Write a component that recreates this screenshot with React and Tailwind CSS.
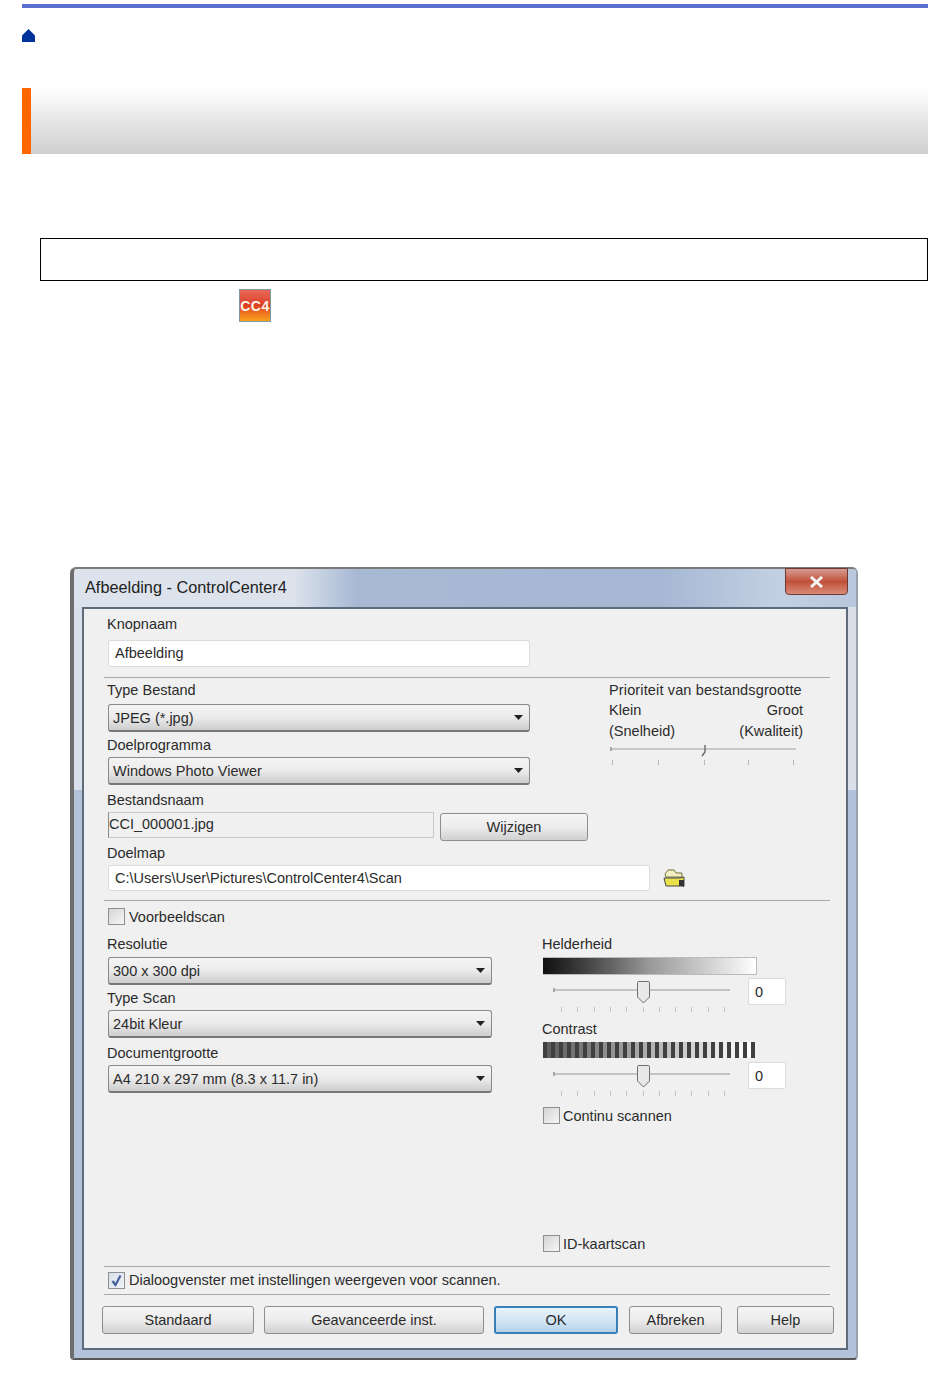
const font = "font-['Liberation_Sans',Arial,sans-serif] text-[14.5px] leading-[16px] text-[#2b2b2b]";

function Label({ children, className = "" }) {
  return <div className={`h-4 whitespace-nowrap -ml-px ${className}`}>{children}</div>;
}

function Arrow() {
  return (
    <svg width="9" height="5" viewBox="0 0 9 5" className="shrink-0">
      <path d="M0 0H9L4.500 5Z" fill="#222" />
    </svg>
  );
}

function Select({ value, className = "" }) {
  return (
    <div className={`flex items-center justify-between pl-1 pr-[6px] rounded-[3px] border border-[#8a8a8a] border-b-2 border-b-[#777] bg-gradient-to-b from-[#f4f4f4] via-[#ebebeb] to-[#cdcdcd] ${className}`}>
      <span className="whitespace-nowrap">{value}</span>
      <Arrow />
    </div>
  );
}

function TextBox({ value, className = "" }) {
  return (
    <div className={`flex items-center pl-[6px] bg-white border border-[#dcdcdc] rounded-[2px] whitespace-nowrap ${className}`}>{value}</div>
  );
}

function Button({ children, primary = false, className = "" }) {
  const tone = primary
    ? "border-2 border-[#3a7fb5] from-[#e8f3fb] via-[#d3e6f5] to-[#b4d2ea]"
    : "border border-[#8e8e8e] from-[#f5f5f5] via-[#ececec] to-[#d0d0d0]";
  return (
    <div className={`flex shrink-0 items-center justify-center h-[28px] rounded-[3px] bg-gradient-to-b whitespace-nowrap ${tone} ${className}`}>{children}</div>
  );
}

function Check({ checked = false }) {
  const tone = checked ? "from-[#d9dfea] to-[#f0f3f8]" : "from-[#d5d5d5] to-[#f6f6f6]";
  return (
    <div className={`w-[17px] h-[17px] shrink-0 border border-[#8f8f8f] bg-gradient-to-br flex items-center justify-center ${tone}`}>
      {checked && (
        <svg width="13" height="13" viewBox="0 0 13 13">
          <path d="M2.500 7L5.500 11L10.500 1.500" fill="none" stroke="#46609c" strokeWidth="2.200" />
        </svg>
      )}
    </div>
  );
}

function Rule({ className = "" }) {
  return <div className={`h-px bg-[#a8a8a8] ${className}`} />;
}

function LevelSlider() {
  const ticks = [18, 34, 51, 67, 83, 100, 116, 132, 148, 165, 181];
  return (
    <svg width="200" height="35" viewBox="0 0 200 35" className="shrink-0">
      <rect x="10" y="11" width="177" height="2" fill="#c4c4c4" />
      <rect x="10" y="10" width="2" height="4" fill="#a8a8a8" />
      {ticks.map((x) => (
        <rect key={x} x={x} y="29" width="1" height="5" fill="#c4c4c4" />
      ))}
      <path d="M94.500 4.500Q94.500 3.500 96 3.500H105Q106.500 3.500 106.500 4.500V19L100.500 25L94.500 19Z" fill="#e8e8e8" stroke="#6f6f6f" />
    </svg>
  );
}

function Stripes() {
  const n = 26;
  return (
    <div className="flex h-4 w-[212px]">
      {Array.from({ length: n }).map((_, i) => {
        const v = Math.round(96 + (i / (n - 1)) * 159);
        return (
          <div key={i} className="flex w-2">
            <div className="w-1 bg-[#404040]" />
            <div className="w-1" style={{ background: `rgb(${v},${v},${v})` }} />
          </div>
        );
      })}
      <div className="w-1 bg-[#404040]" />
    </div>
  );
}

function Folder() {
  return (
    <svg width="22" height="20" viewBox="0 0 22 20" className="shrink-0">
      <path d="M2 5L5 1H11L13 4H19V8H3Z" fill="#f4efc4" stroke="#6f6f3a" />
      <path d="M1 9H17L21 8V17H3Z" fill="#e9e24a" stroke="#444" />
      <path d="M3 18H21V15L20 18Z" fill="#111" />
      <rect x="16" y="11" width="5" height="6" fill="#333" />
    </svg>
  );
}

function PrioritySlider() {
  return (
    <svg width="190" height="22" viewBox="0 0 190 22" className="block">
      <rect x="1" y="3" width="186" height="2" fill="#c8c8c8" />
      <rect x="1" y="2" width="2" height="4" fill="#a8a8a8" />
      {[3, 49, 95, 139, 184].map((x) => (
        <rect key={x} x={x} y="15" width="1" height="5" fill="#b8b8b8" />
      ))}
      <path d="M96 0V7L93 11" fill="none" stroke="#666" strokeWidth="1.400" />
    </svg>
  );
}

export default function App() {
  return (
    <div className="bg-white w-[950px] h-[1387px] overflow-hidden pl-[22px] pt-1">
      <div className="w-[906px]">
        <div className="h-1 bg-[#5b6fd1]" />
        <svg width="13" height="14" viewBox="0 0 13 14" className="block mt-[21px]">
          <path d="M0 6.500L6.500 0L13 6.500V13H0Z" fill="#003399" />
        </svg>
        <div className="mt-[45px] h-[66px] flex bg-gradient-to-b from-white via-[#e6e6e6] to-[#cfcfcf]">
          <div className="w-[9px] bg-[#ff6600]" />
        </div>
        <div className="mt-[84px] ml-[18px] h-[43px] border border-black" />
        <div className="mt-2 ml-[217px] w-8 h-[33px] border border-[#7f9aa0] bg-gradient-to-b from-[#e8685a] via-[#dd3d1f] to-[#f8a21c] flex items-center justify-center font-['Liberation_Sans',sans-serif] font-bold text-[14px] tracking-[0.5px] leading-none text-[#fff3ee]">
          CC4
        </div>

        {/* Dialog window */}
        <div className={`relative mt-[245px] ml-[48px] w-[788px] h-[793px] rounded-t-[6px] rounded-b-[4px] border-l-[4px] border-r-[2px] border-b-2 border-t-2 border-l-[#6d6d6d] border-r-[#9aa3ad] border-t-[#7a7a7a] border-b-[#555] bg-gradient-to-b from-[#d9e0ea] from-[28%] to-[#b1c2da] to-[28%] ${font}`}>
          <div className="absolute right-[8px] -top-px w-[63px] h-[27px] rounded-b-[4px] border border-[#6b3a34] bg-gradient-to-b from-[#d69a90] via-[#c0503a] to-[#d88a78] flex items-center justify-center">
            <svg width="15" height="12" viewBox="0 0 15 12">
              <path d="M2 1L13 11M13 1L2 11" stroke="#f4f4f4" strokeWidth="3" />
            </svg>
          </div>
          <div className="h-[38px] flex items-center pl-[11px] pb-[2px] rounded-t-[5px] bg-[linear-gradient(to_right,#dde3ec_0%,#dde3ec_28%,#a8b9d4_36%,#a5b7d3_75%,#c3d0e3_90%,#b8c7dd_100%)] text-[16.3px] text-[#222]">
            Afbeelding - ControlCenter4
          </div>

          <div className="ml-[8px] mr-[8px] h-[743px] border-2 border-[#5d6b7b] bg-[#f0f0f0] pt-[7px] pl-[20px] pr-[16px]">
            <div className="pl-1">
              <Label>Knopnaam</Label>
              <TextBox value="Afbeelding" className="mt-2 h-[27px] w-[422px] pb-px" />
            </div>
            <Rule className="mt-[10px]" />

            <div className="flex pl-1">
              <div className="w-[501px]">
                <Label className="mt-1">Type Bestand</Label>
                <Select value="JPEG (*.jpg)" className="mt-[6px] h-[28px] w-[422px]" />
                <Label className="mt-[5px]">Doelprogramma</Label>
                <Select value="Windows Photo Viewer" className="mt-1 h-[28px] w-[422px]" />
                <Label className="mt-[7px]">Bestandsnaam</Label>
                <div className="flex mt-1 h-[29px]">
                  <div className="w-[326px] h-[26px] flex items-center pb-[3px] border border-[#c8c8c8] border-l-[#8a8a8a] whitespace-nowrap">CCI_000001.jpg</div>
                  <Button className="ml-[6px] mt-px w-[148px]">Wijzigen</Button>
                </div>
              </div>
              <div className="w-[196px]">
                <div className="mt-1 whitespace-nowrap h-4 tracking-[0.14px]">Prioriteit van bestandsgrootte</div>
                <div className="mt-1 flex justify-between h-4 pr-[2px]">
                  <span>Klein</span>
                  <span>Groot</span>
                </div>
                <div className="mt-[5px] flex justify-between h-4 pr-[2px] whitespace-nowrap">
                  <span>(Snelheid)</span>
                  <span>(Kwaliteit)</span>
                </div>
                <div className="mt-[6px]">
                  <PrioritySlider />
                </div>
              </div>
            </div>

            <div className="pl-1 mt-[4px]">
              <Label>Doelmap</Label>
              <div className="mt-1 flex items-center">
                <TextBox value="C:\Users\User\Pictures\ControlCenter4\Scan" className="h-[26px] w-[542px]" />
                <div className="ml-[13px] mt-[2px]">
                  <Folder />
                </div>
              </div>
            </div>
            <Rule className="mt-[9px]" />

            <div className="pl-1 mt-[7px] flex items-center h-[17px]">
              <Check />
              <span className="ml-[4px] whitespace-nowrap">Voorbeeldscan</span>
            </div>

            <div className="flex pl-1 mt-[11px]">
              <div className="w-[434px]">
                <Label>Resolutie</Label>
                <Select value="300 x 300 dpi" className="mt-[5px] h-[28px] w-[384px]" />
                <Label className="mt-[5px]">Type Scan</Label>
                <Select value="24bit Kleur" className="mt-1 h-[28px] w-[384px]" />
                <Label className="mt-[7px]">Documentgrootte</Label>
                <Select value="A4 210 x 297 mm (8.3 x 11.7 in)" className="mt-1 h-[28px] w-[384px]" />
              </div>
              <div className="w-[250px] pl-px">
                <Label>Helderheid</Label>
                <div className="mt-[5px] h-[18px] w-[214px] border border-[#bbb] border-l-0 bg-gradient-to-r from-[#111] via-[#999] to-white" />
                <div className="mt-[3px] flex">
                  <LevelSlider />
                  <TextBox value="0" className="ml-[5px] h-[27px] w-[38px] pt-px" />
                </div>
                <Label className="mt-2">Contrast</Label>
                <div className="mt-[5px]">
                  <Stripes />
                </div>
                <div className="mt-1 flex">
                  <LevelSlider />
                  <TextBox value="0" className="ml-[5px] h-[27px] w-[38px] pt-px" />
                </div>
                <div className="mt-[10px] flex items-center h-[17px]">
                  <Check />
                  <span className="ml-[3px] whitespace-nowrap">Continu scannen</span>
                </div>
                <div className="mt-[111px] flex items-center h-[17px]">
                  <Check />
                  <span className="ml-[3px] whitespace-nowrap">ID-kaartscan</span>
                </div>
              </div>
            </div>

            <Rule className="mt-[14px]" />
            <div className="pl-1 mt-1 flex items-center h-[18px]">
              <Check checked />
              <span className="ml-[4px] whitespace-nowrap">Dialoogvenster met instellingen weergeven voor scannen.</span>
            </div>
            <Rule className="mt-[5px]" />
            <div className="flex mt-[11px] -ml-[2px]">
              <Button className="w-[152px]">Standaard</Button>
              <Button className="ml-[10px] w-[220px]">Geavanceerde inst.</Button>
              <Button primary className="ml-[10px] w-[124px]">OK</Button>
              <Button className="ml-[11px] w-[93px]">Afbreken</Button>
              <Button className="ml-[15px] w-[97px]">Help</Button>
            </div>
          </div>
        </div>
      </div>
    </div>
  );
}
